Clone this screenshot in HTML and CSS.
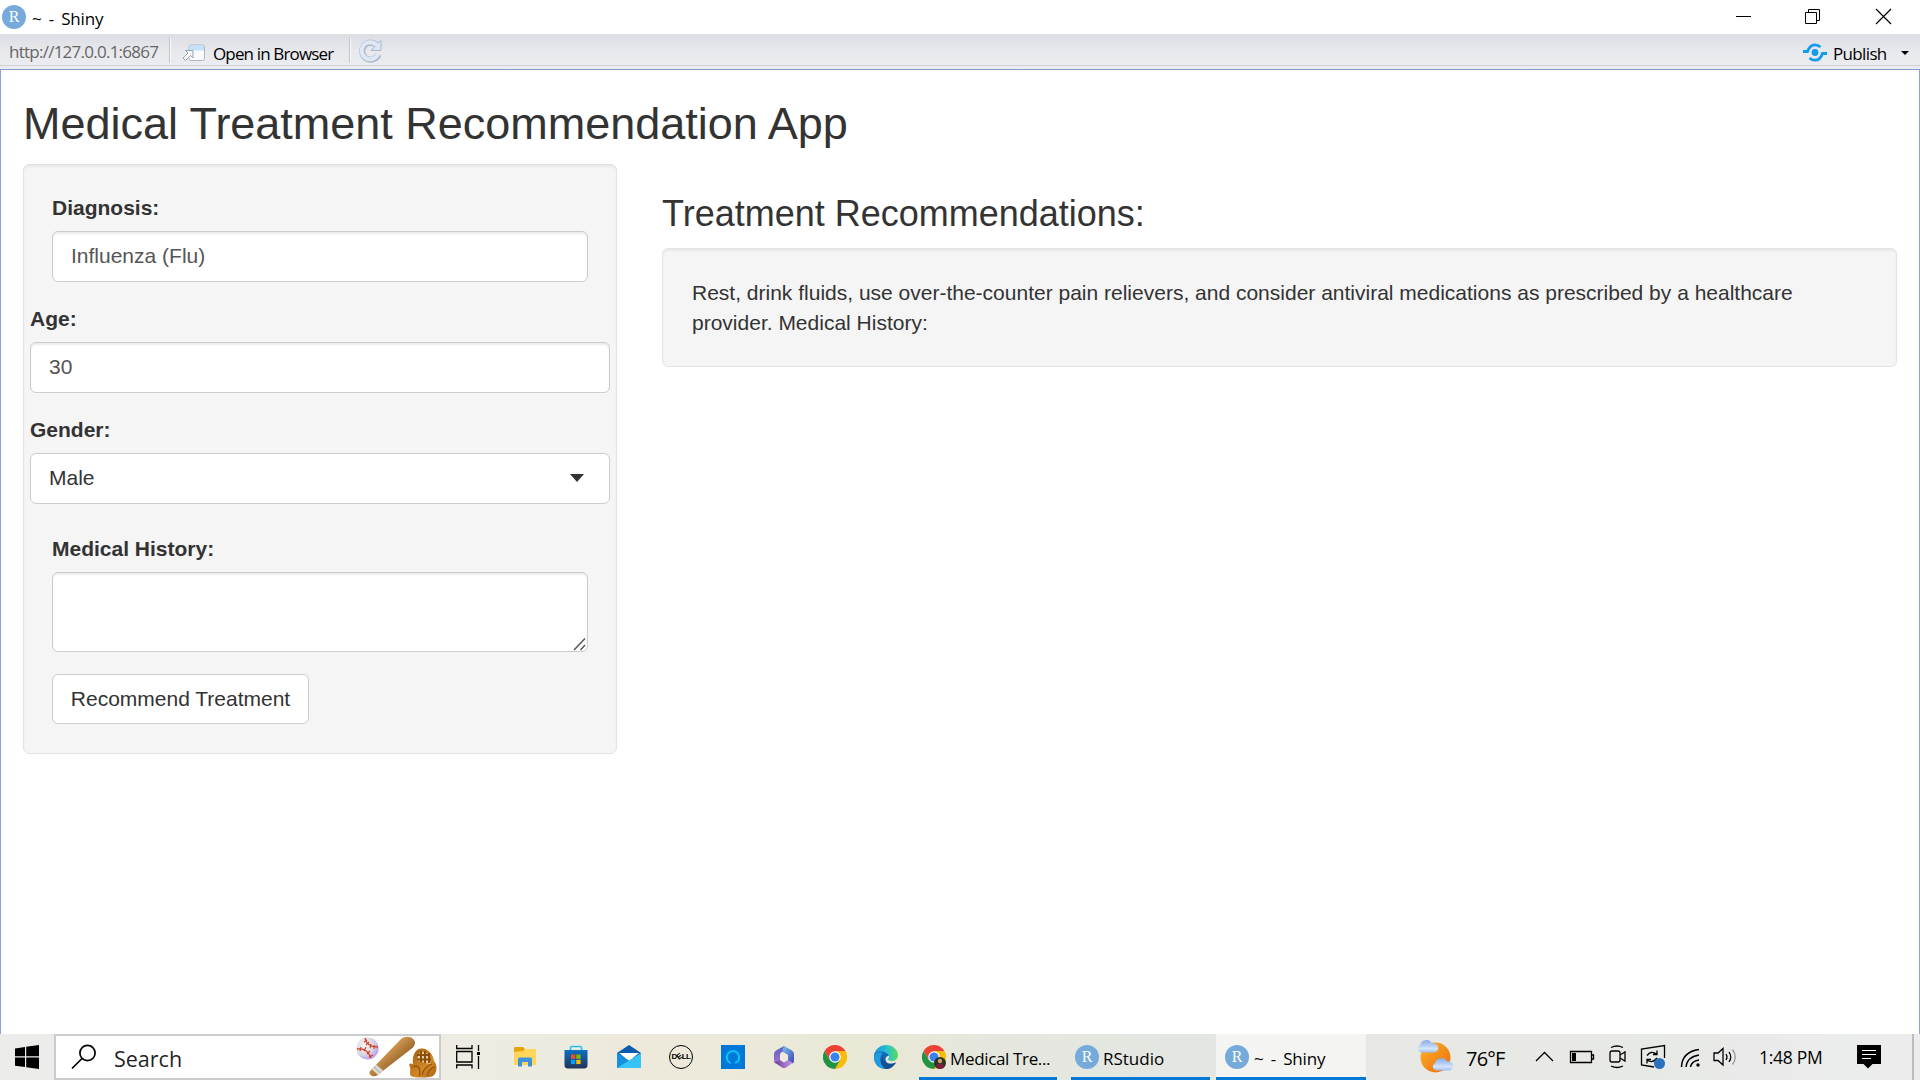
FILE: index.html
```html
<!DOCTYPE html>
<html lang="en">
<head>
<meta charset="utf-8">
<title>~ - Shiny</title>
<link rel="stylesheet" href="styles.css">
</head>
<body>
<svg class="defs" width="0" height="0">
  <symbol id="chrome" viewBox="0 0 24 24">
    <path fill="#ea4335" d="M1.6 6A12 12 0 0 1 22.4 6H12L6.8 15z"/>
    <path fill="#fbbc05" d="M22.4 6A12 12 0 0 1 12 24L17.2 15L12 6z"/>
    <path fill="#229342" d="M1.6 6A12 12 0 0 0 12 24L17.2 15H6.8z"/>
    <circle cx="12" cy="12" r="5.8" fill="#fff"/><circle cx="12" cy="12" r="4.6" fill="#3b82f0"/>
  </symbol>
</svg>

<header class="titlebar">
  <span class="r-logo">R</span>
  <span class="window-title">~ - Shiny</span>
  <svg class="window-buttons" width="150" height="17" viewBox="0 0 150 17" fill="none" stroke="#000">
    <path d="M0 8.5H15M69.5 4.5h11v11h-11zM72.5 4.5V1.5H83.5V12.5H80.5"/>
    <path d="M140 1L155 16M155 1L140 16" stroke-width="1.2"/>
  </svg>
</header>

<nav class="toolbar">
  <span class="url">http://127.0.0.1:6867</span>
  <i class="divider"></i>
  <svg class="open-icon" width="24" height="18" viewBox="0 0 24 18">
    <rect x="7" y="1" width="15.5" height="15.5" rx="2" fill="#f8fafc" stroke="#a9b6c4"/>
    <path d="M7.5 6.5V2.5Q7.5 1.5 8.5 1.5H21Q22 1.5 22 2.5V6.5z" fill="#c5e1f8"/>
    <path d="M1 14l5-5-2.500-2.500H11V14L8.500 11.500L3.500 16.500z" fill="#f4f6f8" stroke="#98a4ae"/>
  </svg>
  <span class="tool-label open-label">Open in Browser</span>
  <i class="divider second"></i>
  <svg class="reload-icon" width="24" height="24" viewBox="0 0 24 24">
    <path d="M19.500 15.500A8.500 8.500 0 1 1 17 5.500" fill="none" stroke="#aab8cc" stroke-width="6"/>
    <path d="M22 1.500V11.500H12L15.500 8L17 5.500z" fill="#dce8f5" stroke="#aab8cc"/>
    <path d="M19 15A8.500 8.500 0 1 1 17.500 6" fill="none" stroke="#dfe9f5" stroke-width="4"/>
  </svg>
  <svg class="publish-icon" width="24" height="19" viewBox="0 0 24 19" fill="none" stroke="#119bed" stroke-width="2.800">
    <circle cx="12" cy="9.500" r="3.400" fill="#119bed" stroke="none"/>
    <path d="M0 8.500H4.500C6 4 9 1.800 12 1.800C14.200 1.800 16 2.700 17.500 4M24 10.500H19.500C18 15 15 17.200 12 17.200C9.800 17.200 8 16.300 6.500 15"/>
  </svg>
  <span class="tool-label publish-label">Publish</span>
  <i class="caret small"></i>
</nav>

<main class="page">
  <h2>Medical Treatment Recommendation App</h2>
  <div class="columns">
    <form class="well sidebar">
      <div class="group">
        <label for="dx">Diagnosis:</label>
        <input class="control dx" id="dx" value="Influenza (Flu)">
      </div>
      <div class="group wide">
        <label for="age">Age:</label>
        <input class="control age" id="age" value="30">
      </div>
      <div class="group wide gender">
        <label>Gender:</label>
        <div class="control select"><span>Male</span><i class="caret"></i></div>
      </div>
      <div class="group">
        <label for="hx">Medical History:</label>
        <div class="area">
          <textarea class="control" id="hx"></textarea>
          <svg class="grip" width="13" height="14" viewBox="0 0 13 14" stroke="#555" stroke-width="1.500"><path d="M1 13L12 1.500M7.500 13L12 8"/></svg>
        </div>
      </div>
      <button type="button">Recommend Treatment</button>
    </form>
    <section class="results">
      <h3>Treatment Recommendations:</h3>
      <div class="well output">Rest, drink fluids, use over-the-counter pain relievers, and consider antiviral medications as prescribed by a healthcare provider. Medical History:</div>
    </section>
  </div>
</main>

<footer class="taskbar">
  <div class="start">
    <svg width="24" height="24" viewBox="0 0 24 24"><path d="M0 3.400L10 2V11.300H0zM11.200 1.800L24 0V11.300H11.200zM0 12.500H10V22L0 20.700zM11.200 12.500H24V24L11.200 22.200z"/></svg>
  </div>
  <div class="search">
    <svg class="lens" width="26" height="26" viewBox="0 0 26 26" fill="none" stroke="#000" stroke-width="1.700"><circle cx="16.500" cy="9" r="7.600"/><path d="M11 14.500L1 24.500"/></svg>
    <span>Search</span>
    <svg class="sports" width="82" height="42" viewBox="0 0 82 42">
      <defs>
        <radialGradient id="ball" cx=".35" cy=".35" r=".7"><stop offset="0" stop-color="#f4f2f4"/><stop offset=".6" stop-color="#dcd8e2"/><stop offset="1" stop-color="#b49bea"/></radialGradient>
        <linearGradient id="bat" x1="0" y1="0" x2="1" y2="1"><stop offset=".35" stop-color="#d39a52"/><stop offset=".7" stop-color="#8f5c22"/></linearGradient>
        <linearGradient id="mitt" x1="0" y1="0" x2="1" y2="1"><stop offset="0" stop-color="#9c5e0c"/><stop offset=".6" stop-color="#d48727"/><stop offset="1" stop-color="#a7620f"/></linearGradient>
      </defs>
      <circle cx="12.500" cy="12.500" r="11" fill="url(#ball)"/>
      <path d="M10 2C11 8 15 11 23 11M2 13C9 12 14 16 16 22" fill="none" stroke="#d33b20" stroke-width="1.300"/>
      <path d="M9 6l3-2M11 9l3-3M15 12l1-4M19 13v-4M5 15l1-4M9 15l2-4M12 18l3-3M14 21l4-2" stroke="#d33b20" stroke-width="1.100"/>
      <path d="M15.500 34.500L45 4C48 1 52 0 56 1.500C61 4 61 8 58 11.500L22 39.500C18 42 12 38 15.500 34.500z" fill="url(#bat)"/>
      <path d="M21 28.500L28.500 34.500L23 39L16.500 33z" fill="#ddd8d2"/><path d="M19 31l6.500 6M22 29l6 5.500" stroke="#aaa39c"/>
      <path d="M55 31C53 27 56 27 58 28C57 20 60 13 66 12.500C73 12 78 18 79 25C83 29 82 37 78 40C73 42 60 42 56 40C54 38 56 35 55 31z" fill="url(#mitt)"/>
      <path d="M63 25C62 18 65 15 69 16C74 17 76 22 75 28z" fill="#f0dcb4"/>
      <path d="M62 19h13M62 23.500h14M66 15v11M70 15v12M74 17v10" stroke="#8a4f08" stroke-width="2.200"/>
      <path d="M58 31C64 28 66 34 64 40M67 39C68 33 73 29 77 28M72 40C73 35 77 31 80 31" fill="none" stroke="#8e530e" stroke-width="1.200"/>
    </svg>
  </div>
  <div class="slot task-view"><svg width="25" height="24" viewBox="0 0 25 24" fill="none" stroke="#000" stroke-width="1.300"><path d="M.7 0V3.500H16V0M.7 6.500H16V17H.7zM.7 23.500V20H16V23.500M22.500 0V6M22.500 11V24"/><path d="M21 7h3v3h-3z" fill="#000" stroke="none"/></svg></div>

  <div class="pinned">
    <div class="slot"><svg width="22" height="20" viewBox="0 0 22 20"><path fill="#e5a50a" d="M0 1Q0 0 1 0H9L11 2V6H0z"/><path fill="#ffd65c" d="M0 5L9 4L11 2H22V18H0z"/><path fill="#3c92dc" d="M4 12Q4 10.500 5.500 10.500H16.500Q18 10.500 18 12V19.500H14V15H8V19.500H4z"/></svg></div>
    <div class="slot store"><svg width="24" height="24" viewBox="0 0 24 24"><defs><linearGradient id="store" x2="0" y2="1"><stop stop-color="#0b70c4"/><stop offset="1" stop-color="#243358"/></linearGradient></defs><path d="M6.500 6V2.800Q6.500 1.500 7.800 1.500H16.200Q17.500 1.500 17.500 2.800V6" fill="none" stroke="#20c1f5" stroke-width="1.600"/><path d="M.5 5H23.500V20Q23.500 23.500 20 23.500H4Q.5 23.500 .5 20z" fill="url(#store)"/><path fill="#f25022" d="M7 9.500h4.300v4.300H7z"/><path fill="#7fba00" d="M12.300 9.500h4.300v4.300h-4.300z"/><path fill="#00a4ef" d="M7 14.800h4.300v4.300H7z"/><path fill="#ffb900" d="M12.300 14.800h4.300v4.300h-4.300z"/></svg></div>
    <div class="slot"><svg width="24" height="24" viewBox="0 0 24 24"><path fill="#0b5cab" d="M0 8L12 0L24 8V13H0z"/><path fill="#fff" d="M2 8H22L12 16z"/><path fill="#1590dc" d="M0 8L12 15.500L24 23H0z"/><path fill="#37c3f6" d="M24 8L0 23H24z"/></svg></div>
    <div class="slot"><span class="dell">D<b>E</b>LL</span></div>
    <div class="slot"><svg width="24" height="24" viewBox="0 0 24 24"><path fill="#0078d7" d="M0 0H24V24H0z"/><path d="M9.800 18A6.200 6.200 0 1 1 14.200 18" fill="none" stroke="#08c8f8" stroke-width="2"/></svg></div>
    <div class="slot m365"><svg width="22" height="24" viewBox="0 0 22 24"><defs><linearGradient id="m1" x2="1" y2="1"><stop stop-color="#77c0f2"/><stop offset="1" stop-color="#4146b0"/></linearGradient><linearGradient id="m2" x2="0" y2="1"><stop stop-color="#5a63c8"/><stop offset="1" stop-color="#a070c8"/></linearGradient><linearGradient id="m3" x2="1"><stop stop-color="#6b3f96"/><stop offset="1" stop-color="#c99af0"/></linearGradient></defs><path fill="url(#m2)" d="M11 1L3 5.500Q1 6.500 1 9V16Q1 18 3 18.500L7 17V10Q7 8 9 7L14 4z"/><path fill="url(#m1)" d="M11 1L19 5.500Q21 7 21 9V16Q21 17.500 19.500 18.500L15 16V10L10 7Q9 4 11 1z"/><path fill="url(#m3)" d="M1.500 17.500L7 15L11 17.500L15 15L20 18L13 22.500Q11 23.500 9 22.500z"/><path fill="#eeeadf" d="M11 7.800L14.800 10V14.800L11 17L7.200 14.800V10z"/></svg></div>
    <div class="slot tight"><svg width="24" height="24"><use href="#chrome"/></svg></div>
    <div class="slot tight"><svg width="24" height="24" viewBox="0 0 24 24"><defs><linearGradient id="e1" x2="1"><stop stop-color="#1691d8"/><stop offset=".55" stop-color="#2bc0d2"/><stop offset="1" stop-color="#5bdd55"/></linearGradient></defs><path fill="#1266b8" d="M0 12C0 5 6 4 10 6L16 10L12 12C10 17 15 21 22 17.500C19 22 16 24 12 24C5 24 0 19 0 12z"/><path fill="url(#e1)" d="M0 11C1 4 6 0 12 0C19 0 24 5 24 10C24 14 21 16 18 16C15 16 14 15 14 14C16 12 15 9 12 8C7 5 1 7 0 11z"/><path fill="#1d9de0" d="M0 12C1 8 5 6 9 8C5 11 5 20 12 24C5 24 0 19 0 12z"/><path fill="#134e91" d="M9 11C8 17 14 21 22 17.500C19 22 16 24 12 24C7 21 6 15 9 11z"/></svg></div>
  </div>

  <div class="task medical">
    <svg width="24" height="24" viewBox="0 0 24 24"><use href="#chrome"/><circle cx="18" cy="18" r="6" fill="#29351f"/><circle cx="18" cy="16" r="2.200" fill="#d29a7c"/><path fill="#7b1f3e" d="M13.500 22Q14 18.500 18 18.500T22.500 22Q18 26 13.500 22z"/></svg>
    <span>Medical Tre...</span>
  </div>
  <div class="task rstudio"><span class="r-logo">R</span><span>RStudio</span></div>
  <div class="task shiny"><span class="r-logo">R</span><span class="shiny-label">~ - Shiny</span></div>

  <svg class="weather" width="37" height="34" viewBox="0 0 37 34">
    <defs><linearGradient id="sun" x2="1" y2="1"><stop stop-color="#f7b529"/><stop offset="1" stop-color="#f06a0c"/></linearGradient><linearGradient id="cloud" x2="0" y2="1"><stop stop-color="#86a9e8"/><stop offset=".7" stop-color="#d5e5fb"/><stop offset="1" stop-color="#9fbceb"/></linearGradient></defs>
    <circle cx="18.500" cy="18.500" r="15" fill="url(#sun)"/>
    <path id="puff" fill="url(#cloud)" d="M4 13.500A4 4 0 0 1 3 6A6.500 6.500 0 0 1 15 4.500A4.700 4.700 0 0 1 18 13.500z"/>
    <use href="#puff" x="15" y="18"/>
  </svg>
  <span class="temp">76°F</span>

  <svg class="tray" width="202" height="26" viewBox="0 0 202 26" fill="none" stroke="#000" stroke-width="1.300">
    <path d="M1 17L9.500 8.500L18 17"/>
    <path d="M35.500 7.500H56.500V18.500H35.500zM57 11h1.500v4H57"/><path d="M37 9h4v8h-4z" fill="#000" stroke="none"/>
    <rect x="75" y="7" width="10" height="11" rx="2"/><path d="M85 11L90 8V17L85 14M76 3.500Q82 .5 88 3.500M76 22Q82 25 88 22"/>
    <path d="M119 23L106.500 21V5L129.500 1.500V14M112 11.500Q116 6 121.500 10M122 6.500V10.500H118M122 14Q118 19.500 112.500 16.500M112 19.500V15.500H116"/>
    <circle cx="124.500" cy="19.500" r="5.500" fill="#2a70bd" stroke="none"/>
    <g stroke-width="1.500"><path d="M146.500 23Q147 8 164 5.500M151 23Q152 13 164 11M155.500 23Q156.500 17 164 16"/><circle cx="163" cy="21" r="1.700" fill="#000" stroke="none"/></g>
    <path d="M179 9H183L188 4.500V21L183 16.500H179zM191 10Q193 13 191 16M194 8Q197.500 13 194 18"/><path d="M197.500 5.500Q203 13 197.500 20.500" stroke="#999"/>
  </svg>
  <span class="clock">1:48 PM</span>
  <svg class="notice" width="24" height="24" viewBox="0 0 24 24"><path d="M0 0H24V19H15.500L11 23.500L6.500 19H0z"/><path d="M5 5.500H19M5 9.500H19M5 13.500H14" stroke="#fff" stroke-width="1.200"/></svg>
  <i class="desktop-edge"></i>
</footer>
</body>
</html>
```
FILE: styles.css
```css
* { box-sizing: border-box; }
body {
  margin: 0;
  width: 1920px;
  height: 1080px;
  overflow: hidden;
  display: flex;
  flex-direction: column;
  background: #fff;
  color: #333;
  font: 21px/30px "Liberation Sans", Arial, sans-serif;
}
.defs { display: none; }
svg { display: block; flex: none; overflow: visible; }
i { flex: none; }

.titlebar, .toolbar, .taskbar {
  display: flex;
  flex: none;
  color: #000;
  font-family: "Open Sans", "Noto Sans", sans-serif;
  white-space: nowrap;
}
.r-logo {
  flex: none;
  width: 24px;
  height: 24px;
  border-radius: 50%;
  background: #75aadb;
  color: #fff;
  font: 16px/23px "Liberation Serif", serif;
  text-align: center;
  letter-spacing: 0;
  word-spacing: 0;
}
.titlebar { height: 34px; padding: 5px 34px 0 2px; }
.window-title { margin-left: 6px; font-size: 17px; line-height: 27px; letter-spacing: -.2px; word-spacing: 3px; }
.window-buttons { margin: 3px 0 0 auto; width: 150px; }

.toolbar {
  height: 36px;
  padding-left: 9px;
  background: linear-gradient(#dcdde2, #e8e9ed 50%, #ebecef 88%, #d2d3d6 89%, #d2d3d6 91%, #ebecef 92%);
  border-bottom: 1px solid #829fd0;
  font-size: 17px;
}
.url { width: 150px; color: #666; line-height: 36px; letter-spacing: -.75px; }
.divider { width: 2px; height: 25px; margin: 4px 0 0 10px; border-left: 1px solid #c4c5c9; background: #f8f8f9; }
.divider.second { margin-left: 14px; }
.open-icon { margin: 10px 0 0 11px; }
.tool-label { line-height: 39px; letter-spacing: -.85px; }
.open-label { width: 122px; margin-left: 7px; }
.reload-icon { margin: 5px 0 0 8px; }
.publish-icon { margin: 9px 0 0 auto; }
.publish-label { width: 53px; margin-left: 6px; letter-spacing: -.65px; }
.caret { width: 0; height: 0; border: 7px solid transparent; border-top: 8px solid #333; border-bottom: 0; }
.caret.small { margin: 17px 11px 0 15px; border-width: 4px 4px 0; border-top-color: #000; }

.page {
  flex: 1;
  padding: 29px 22px 0;
  border: solid #86a5d9;
  border-width: 0 1px;
}
h2, h3 { margin: 0; font-weight: 400; color: #333; }
h2 { font-size: 45px; line-height: 49px; margin-bottom: 16px; letter-spacing: -.02px; }
.columns { display: flex; align-items: flex-start; gap: 45px; }
.well {
  background: #f5f5f5;
  border: 1px solid #e3e3e3;
  border-radius: 6px;
  box-shadow: inset 0 2px 2px rgba(0, 0, 0, .05);
}
.sidebar { width: 594px; height: 590px; padding: 28px 28px 0; }
.group { display: flex; flex-direction: column; margin-bottom: 22px; }
.wide { margin-left: -22px; margin-right: -22px; }
.gender { margin-bottom: 30px; }
label { font-weight: 700; line-height: 30px; margin-bottom: 8px; }
.control {
  display: block;
  width: 100%;
  height: 51px;
  padding: 9px 18px;
  border: 1px solid #ccc;
  border-radius: 6px;
  background: #fff;
  box-shadow: inset 0 2px 2px rgba(0, 0, 0, .075);
  color: #555;
  font: inherit;
  outline: 0;
}
.dx { padding: 8px 18px 10px; }
.age { padding: 8px 18px 10px; }
.select { display: flex; justify-content: space-between; color: #333; box-shadow: none; }
.select .caret { margin: 11px 7px 0 0; }
.area { position: relative; }
textarea.control { height: 80px; resize: none; }
.grip { position: absolute; right: 2px; bottom: 1px; }
button {
  display: block;
  width: 257px;
  height: 50px;
  padding: 0;
  border: 1px solid #ccc;
  border-radius: 6px;
  background: #fff;
  color: #333;
  font: inherit;
}
.results { width: 1235px; padding-top: 30px; }
h3 { font-size: 36px; line-height: 40px; margin-bottom: 14px; }
.output { height: 119px; padding: 29px; }

.taskbar {
  height: 46px;
  background: linear-gradient(90deg, #ececeb, #eeebe3 450px, #edeadc 650px, #e9e8d6 890px, #e5e7df 1000px, #e4e6e2 1200px, #e8e9e5 1450px, #e7e9e6 1650px, #ebecec 1850px, #ececec);
}
.start { width: 54px; padding: 11px 0 0 15px; }
.search { display: flex; width: 387px; border: 2px solid #ccc; background: #fff; }
.lens { margin: 8px 0 0 15px; }
.search span { width: 68px; margin-left: 17px; color: #1f1f1f; font-size: 21.500px; line-height: 46px; letter-spacing: 0; }
.sports { margin: 0 2px 0 auto; }
.slot { display: flex; width: 52px; height: 46px; align-items: center; justify-content: center; }
.task-view { width: 58px; padding-right: 3px; }
.pinned { display: flex; width: 420px; }
.store, .m365, .tight { padding-right: 2px; }
.tight { width: 50.500px; }
.dell {
  width: 24px;
  height: 24px;
  border: 1.500px solid #000;
  border-radius: 50%;
  font: 700 8px/21px "Liberation Sans", sans-serif;
  letter-spacing: -.5px;
  text-align: center;
}
.dell b { display: inline-block; transform: rotate(-35deg); }
.task { display: flex; border-bottom: 3px solid #0078d7; font-size: 17px; line-height: 50px; letter-spacing: -.35px; }
.task > :first-child { margin: 11px 4px 0 4px; }
.medical { width: 138px; }
.medical > :first-child { margin-left: 3px; }
.rstudio { width: 139px; margin-left: 14px; }
.rstudio span:last-child { letter-spacing: 0; }
.shiny { width: 150px; margin-left: 6px; background: #f4f4f2; }
.shiny > :first-child { margin: 11px 5px 0 9px; }
.shiny-label { letter-spacing: -.2px; word-spacing: 3px; }
.weather { margin: 5px 0 0 51px; }
.temp { width: 70px; margin-left: 12px; font-size: 20px; line-height: 49px; letter-spacing: -.8px; }
.tray { margin: 10px 0 0 -1px; }
.clock { width: 98px; margin-left: 22px; font-size: 17.500px; line-height: 47px; letter-spacing: -.3px; }
.notice { margin-top: 11px; }
.desktop-edge { width: 2px; margin-left: 31px; background: #bbb; }
```
